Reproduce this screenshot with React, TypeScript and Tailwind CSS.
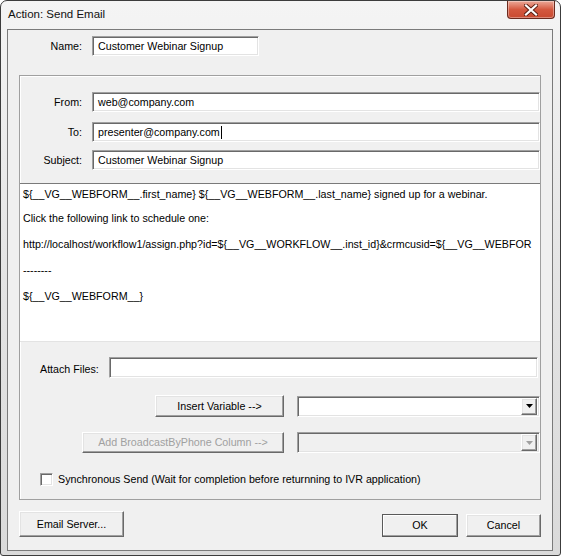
import React from "react";

const sunken =
  "border border-t-[#a0a0a0] border-l-[#a0a0a0] border-b-white border-r-white shadow-[inset_1px_1px_0_#696969,inset_-1px_-1px_0_#e3e3e3]";
const raised =
  "border border-t-white border-l-white border-b-[#696969] border-r-[#696969] shadow-[inset_-1px_-1px_0_#a0a0a0,inset_1px_1px_0_#e3e3e3] bg-[#f0f0f0]";

const bodyLines = [
  "${__VG__WEBFORM__.first_name} ${__VG__WEBFORM__.last_name} signed up for a webinar.",
  "Click the following link to schedule one:",
  "http://localhost/workflow1/assign.php?id=${__VG__WORKFLOW__.inst_id}&crmcusid=${__VG__WEBFOR",
  "--------",
  "${__VG__WEBFORM__}",
];

function Field({ value, caret }: { value: string; caret?: boolean }) {
  return (
    <div className={`flex h-[20px] flex-1 items-center bg-white pl-[5px] ${sunken}`}>
      <span>{value}</span>
      {caret && <span className="ml-px h-[13px] w-px bg-black" />}
    </div>
  );
}

function Combo({ disabled }: { disabled?: boolean }) {
  return (
    <div className={`flex h-[21px] w-[243px] items-center justify-end p-[2px] ${sunken} ${disabled ? "bg-[#f0f0f0]" : "bg-white"}`}>
      <div className={`flex h-[17px] w-[16px] items-center justify-center ${raised}`}>
        <svg width="7" height="4" viewBox="0 0 7 4">
          <path d="M0 0h7L3.5 4z" fill={disabled ? "#a0a0a0" : "#000"} />
        </svg>
      </div>
    </div>
  );
}

export default function App() {
  return (
    <div className="h-[556px] w-[561px] overflow-hidden bg-white font-['Liberation_Sans',Arial,sans-serif] text-[10.7px] text-black">
      <div className="flex h-full flex-col rounded-t-[7px] rounded-b-[3px] border border-[#3c3c3c] bg-gradient-to-b from-[#f4f4f4] via-[#e4e4e4] to-[#dadada]">
        {/* title bar */}
        <div className="flex h-[28px] shrink-0 justify-between">
          <div className="flex items-center pl-[7px] text-[11.5px] text-[#111]">Action: Send Email</div>
          <div className="mr-[5px] flex h-[18px] w-[48px] items-center justify-center rounded-b-[4px] border border-t-0 border-[#6b2a1e] bg-gradient-to-b from-[#eaa898] via-[#d4583f] to-[#c94a30] shadow-[inset_0_0_0_1px_rgba(255,255,255,0.35)]">
            <svg width="14" height="12" viewBox="0 0 14 12">
              <path d="M2 1.5l10 9M12 1.5l-10 9" stroke="#5a1e12" strokeWidth="4" strokeLinecap="square" />
              <path d="M2 1.5l10 9M12 1.5l-10 9" stroke="#fff" strokeWidth="2.2" strokeLinecap="square" />
            </svg>
          </div>
        </div>

        {/* client area */}
        <div className="ml-[6px] mr-[7px] mb-[4px] flex h-[522px] flex-col border border-[#7a7a7a] bg-[#f0f0f0]">
          <div className="mt-[6px] flex items-center">
            <div className="w-[74px] text-right">Name:</div>
            <div className="ml-[10px] flex w-[167px]">
              <Field value="Customer Webinar Signup" />
            </div>
          </div>

          {/* group box */}
          <div className="ml-[11px] mt-[19px] flex h-[425px] w-[522px] flex-col border border-[#a0a0a0] shadow-[inset_1px_1px_0_#fff]">
            <div className="mt-[16px] flex items-center">
              <div className="w-[62px] text-right">From:</div>
              <div className="ml-[10px] flex flex-1">
                <Field value="web@company.com" />
              </div>
            </div>
            <div className="mt-[10px] flex items-center">
              <div className="w-[62px] text-right">To:</div>
              <div className="ml-[10px] flex flex-1">
                <Field value="presenter@company.com" caret />
              </div>
            </div>
            <div className="mt-[8px] flex items-center">
              <div className="w-[62px] text-right">Subject:</div>
              <div className="ml-[10px] flex flex-1">
                <Field value="Customer Webinar Signup" />
              </div>
            </div>

            <div className="mt-[13px] h-[159px] overflow-hidden border-t border-b border-t-[#7a7a7a] border-b-[#e3e3e3] bg-white pl-[3px]">
              {bodyLines.map((line, i) => (
                <div key={i} className={`flex items-center whitespace-nowrap ${i === 0 ? "h-[21px]" : "h-[26px]"}`}>
                  {line}
                </div>
              ))}
            </div>

            <div className="mt-[15px] flex items-center pl-[20px] pr-[2px]">
              <div className="pt-[4px]">Attach Files:</div>
              <div className={`ml-[10px] h-[21px] flex-1 bg-white ${sunken}`} />
            </div>

            <div className="mt-[17px] flex items-center justify-end gap-[13px]">
              <button className={`h-[22px] w-[129px] ${raised}`}>Insert Variable --&gt;</button>
              <Combo />
            </div>

            <div className="mt-[15px] flex items-center justify-end gap-[13px]">
              <button className={`h-[21px] w-[202px] text-[#a0a0a0] ${raised}`}>Add BroadcastByPhone Column --&gt;</button>
              <Combo disabled />
            </div>

            <div className="mt-[18px] flex items-center pl-[20px]">
              <div className={`h-[13px] w-[13px] bg-white ${sunken}`} />
              <div className="ml-[5px]">Synchronous Send (Wait for completion before returnning to IVR application)</div>
            </div>
          </div>

          {/* bottom buttons */}
          <div className="mt-[11px] flex items-end pl-[11px]">
            <button className={`h-[26px] w-[105px] ${raised}`}>Email Server...</button>
            <div className="flex-1" />
            <button className="h-[23px] w-[76px] border border-[#5a5a5a] bg-[#f0f0f0] shadow-[inset_-1px_-1px_0_#a0a0a0,inset_1px_1px_0_#fff]">
              OK
            </button>
            <button className={`ml-[8px] mr-[11px] h-[23px] w-[75px] ${raised}`}>Cancel</button>
          </div>
        </div>
      </div>
    </div>
  );
}
